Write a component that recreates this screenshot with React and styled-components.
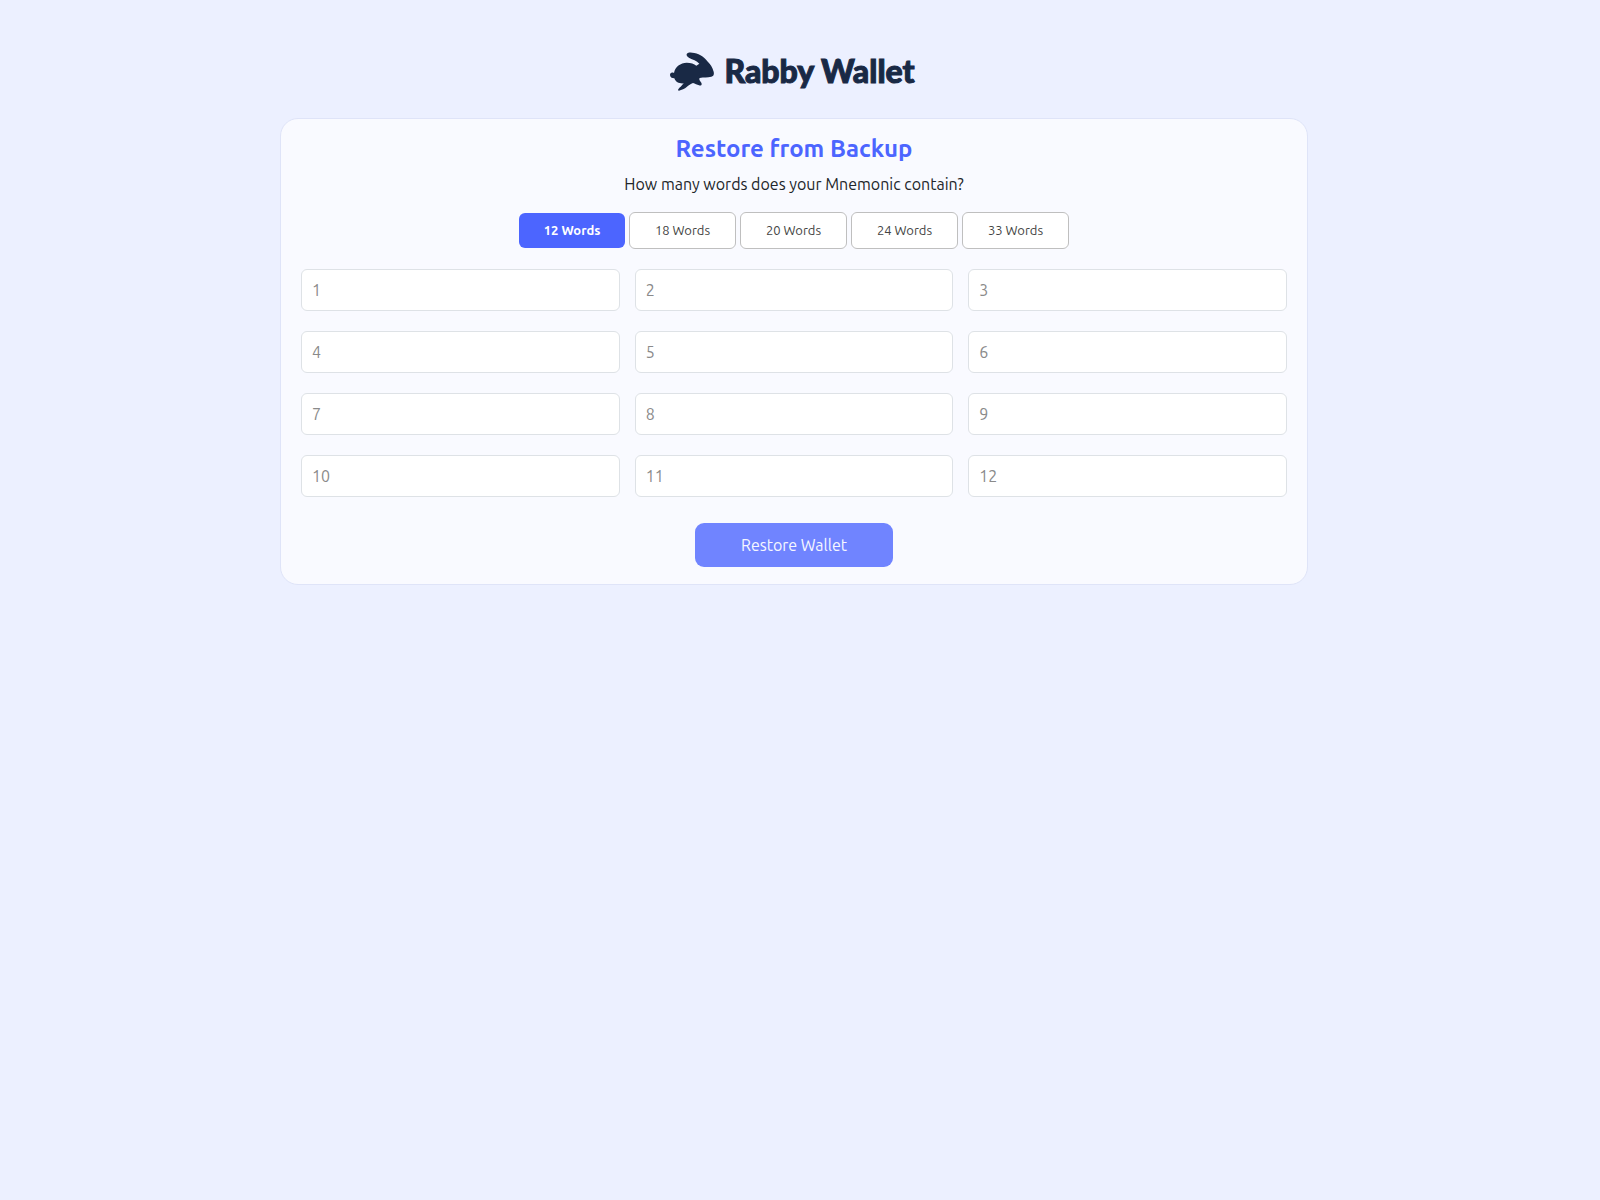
import React from "react";
import styled, { createGlobalStyle } from "styled-components";

const GlobalStyle = createGlobalStyle`
  * { box-sizing: border-box; }
  body {
    margin: 0;
    background: #ecf0ff;
    color: #212529;
    font-family: Ubuntu, "Noto Sans", sans-serif;
    font-size: 16px;
    line-height: 24px;
  }
`;

const Page = styled.main`
  display: flex;
  flex-direction: column;
  align-items: center;
  padding: 49px 12px 40px 0;
`;

const Brand = styled.div`
  display: flex;
  align-items: center;
  gap: 10px;
  height: 44px;
  margin-bottom: 25px;
  padding-right: 3px;
  color: #192945;
`;

const BrandName = styled.span`
  font-family: Lato, sans-serif;
  font-size: 32px;
  font-weight: 900;
  line-height: 44px;
  -webkit-text-stroke: 1px currentColor;
`;

const Card = styled.section`
  width: 100%;
  max-width: 1028px;
  padding: 16px 20px 17px;
  background: #f9faff;
  border: 1px solid #dfe4f8;
  border-radius: 18px;
  text-align: center;
`;

const Title = styled.h1`
  margin: 0 0 9px;
  color: #4c65ff;
  font-size: 24px;
  font-weight: 600;
  line-height: 28px;
`;

const Question = styled.p`
  margin: 0 0 16px;
`;

const Lengths = styled.div`
  display: flex;
  flex-wrap: wrap;
  justify-content: center;
  align-items: center;
  gap: 4px;
  margin-bottom: 20px;
`;

const LengthButton = styled.button`
  width: ${(p) => (p.$active ? 106 : 107)}px;
  height: ${(p) => (p.$active ? 35 : 37)}px;
  padding: 0 0 1px;
  border: ${(p) => (p.$active ? "none" : "1px solid #bfbfbf")};
  border-radius: 6px;
  background: ${(p) => (p.$active ? "#4c65ff" : "#ffffff")};
  color: ${(p) => (p.$active ? "#ffffff" : "#444444")};
  font-family: inherit;
  font-size: 13px;
  font-weight: ${(p) => (p.$active ? 600 : 400)};
`;

const Grid = styled.div`
  display: grid;
  grid-template-columns: repeat(3, minmax(0, 1fr));
  gap: 20px 15px;
  margin-bottom: 26px;
`;

const Field = styled.input`
  width: 100%;
  height: 42px;
  padding: 0 10px;
  border: 1px solid #dee2e6;
  border-radius: 6px;
  background: #ffffff;
  font-family: inherit;
  font-size: 16px;
  &::placeholder { color: #8a8a8a; opacity: 1; }
`;

const Submit = styled.button`
  display: block;
  width: 198px;
  height: 44px;
  margin: 0 auto;
  padding: 0;
  border: none;
  border-radius: 9px;
  background: #7084ff;
  color: #f6f7ff;
  font-family: inherit;
  font-size: 16px;
`;

const lengths = [12, 18, 20, 24, 33];
const cells = Array.from({ length: 12 }, (_, i) => i + 1);

function Rabbit() {
  return (
    <svg width="44" height="39" viewBox="18 15 132 117" fill="currentColor" aria-hidden="true">
      <path d="M68 22C69 16 80 15 91 18C109 21 123 33 130 43C139 51 145 61 149 74C151 84 148 88 142 89C130 92 120 90 107 93C104 98 108 101 112 107C115 113 111 117 105 115C99 114 93 109 87 108C80 111 74 114 68 120C63 126 52 129 45 131C39 131 44 123 50 119L59 109C46 110 35 106 31 94C23 94 18 90 18 84C18 78 23 75 30 78C33 58 50 48 68 47C81 47 90 50 97 56L106 50C98 41 86 38 76 33C71 30 67 26 68 22Z" />
    </svg>
  );
}

// Display-only layout: the fields are read-only and nothing is stored or sent.
export default function App() {
  return (
    <>
      <GlobalStyle />
      <Page>
        <Brand>
          <Rabbit />
          <BrandName>Rabby Wallet</BrandName>
        </Brand>
        <Card>
          <Title>Restore from Backup</Title>
          <Question>How many words does your Mnemonic contain?</Question>
          <Lengths>
            {lengths.map((n) => (
              <LengthButton key={n} type="button" $active={n === 12} aria-pressed={n === 12}>
                {n} Words
              </LengthButton>
            ))}
          </Lengths>
          <Grid>
            {cells.map((n) => (
              <Field key={n} type="text" placeholder={n} aria-label={`Word ${n}`} autoComplete="off" readOnly />
            ))}
          </Grid>
          <Submit type="button" disabled>Restore Wallet</Submit>
        </Card>
      </Page>
    </>
  );
}
